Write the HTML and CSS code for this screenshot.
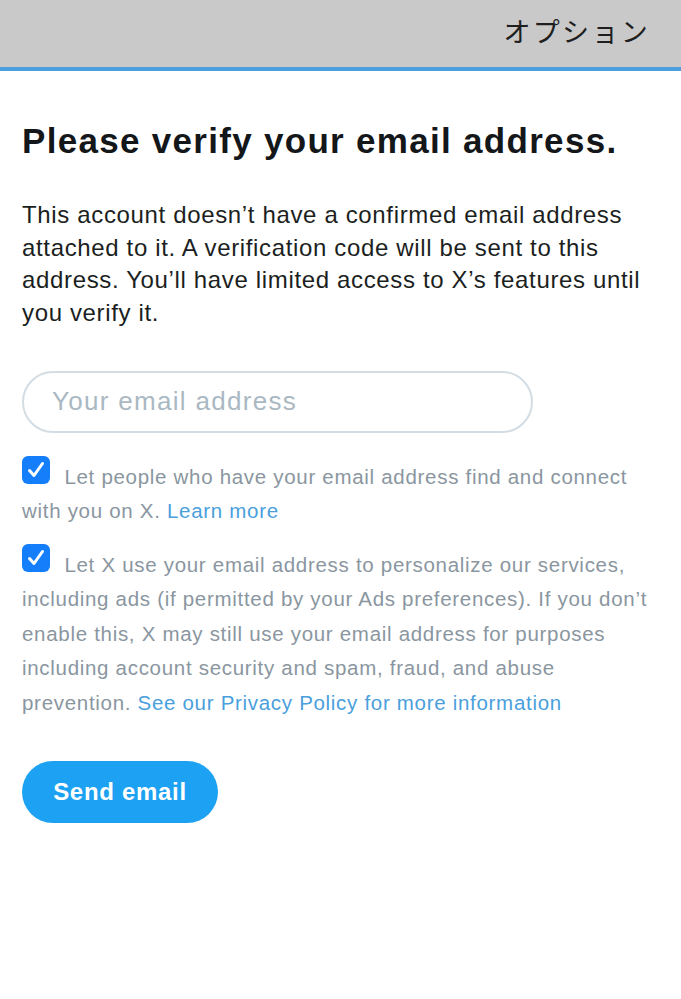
FILE: index.html
```html
<!DOCTYPE html>
<html>
<head>
<meta charset="utf-8">
<link rel="stylesheet" href="styles.css">
</head>
<body>
<header class="topbar">
  <span class="topbar-title">オプション</span>
</header>
<main class="content">
  <h1 class="title">Please verify your email address.</h1>
  <p class="lead">This account doesn’t have a confirmed email address attached to it. A verification code will be sent to this address. You’ll have limited access to X’s features until you verify it.</p>
  <div class="field">
    <input class="email" type="email" placeholder="Your email address">
  </div>
  <p class="opt">
    <span class="check"><svg viewBox="0 0 28 28" width="28" height="28"><rect x="0" y="0" width="28" height="28" rx="6" fill="#147efb"/><path d="M7.5 14.5 L12 19.5 L20.5 7.5" fill="none" stroke="#fff" stroke-width="3" stroke-linecap="round" stroke-linejoin="round"/></svg></span>
    Let people who have your email address find and connect with you on X. <a class="link">Learn more</a>
  </p>
  <p class="opt">
    <span class="check"><svg viewBox="0 0 28 28" width="28" height="28"><rect x="0" y="0" width="28" height="28" rx="6" fill="#147efb"/><path d="M7.5 14.5 L12 19.5 L20.5 7.5" fill="none" stroke="#fff" stroke-width="3" stroke-linecap="round" stroke-linejoin="round"/></svg></span>
    Let X use your email address to personalize our services, including ads (if permitted by your Ads preferences). If you don’t enable this, X may still use your email address for purposes including account security and spam, fraud, and abuse prevention. <a class="link">See our Privacy Policy for more information</a>
  </p>
  <button class="send">Send email</button>
</main>
</body>
</html>
```
FILE: styles.css
```css
* { box-sizing: border-box; }
html, body { margin: 0; padding: 0; background: #fff; }
body {
  font-family: "Liberation Sans", Arial, "Noto Sans CJK JP", sans-serif;
  color: #14171a;
}
.topbar {
  height: 71px;
  background: #c9c9c9;
  border-bottom: 4px solid #4c9fdd;
  display: flex;
  justify-content: flex-end;
  align-items: center;
  padding: 0 31px 6px 0;
}
.topbar-title {
  font-family: "Noto Sans CJK JP", sans-serif;
  font-size: 27px;
  color: #1e1e1e;
  letter-spacing: 2.3px;
}
.content {
  padding: 0 22px;
}
.title {
  margin: 48px 0 0;
  font-size: 35px;
  font-weight: bold;
  line-height: 44px;
  letter-spacing: 1.3px;
}
.lead {
  margin: 36px 0 0;
  font-size: 24px;
  line-height: 32.7px;
  letter-spacing: 0.65px;
  color: #1c1f22;
}
.field { margin-top: 41px; }
.email {
  width: 511px;
  height: 62px;
  border: 2px solid #d3dde3;
  border-radius: 31px;
  padding: 0 28px;
  font-family: inherit;
  font-size: 26px;
  letter-spacing: 1.3px;
  outline: none;
}
.email::placeholder { color: #aab8c2; }
.opt {
  margin: 23px 0 0;
  font-size: 20.5px;
  line-height: 34.5px;
  letter-spacing: 0.7px;
  color: #8a96a0;
}
.opt + .opt { margin-top: 15px; }
.check {
  display: inline-block;
  width: 28px;
  height: 28px;
  vertical-align: 0;
  margin-right: 8px;
}
.check svg { display: block; }
.link { color: #4aa0dc; text-decoration: none; }
.send {
  margin-top: 41px;
  height: 62px;
  width: 196px;
  border: none;
  border-radius: 31px;
  background: #1da1f2;
  color: #fff;
  font-family: inherit;
  font-weight: bold;
  font-size: 24px;
  letter-spacing: 0.7px;
}
```
